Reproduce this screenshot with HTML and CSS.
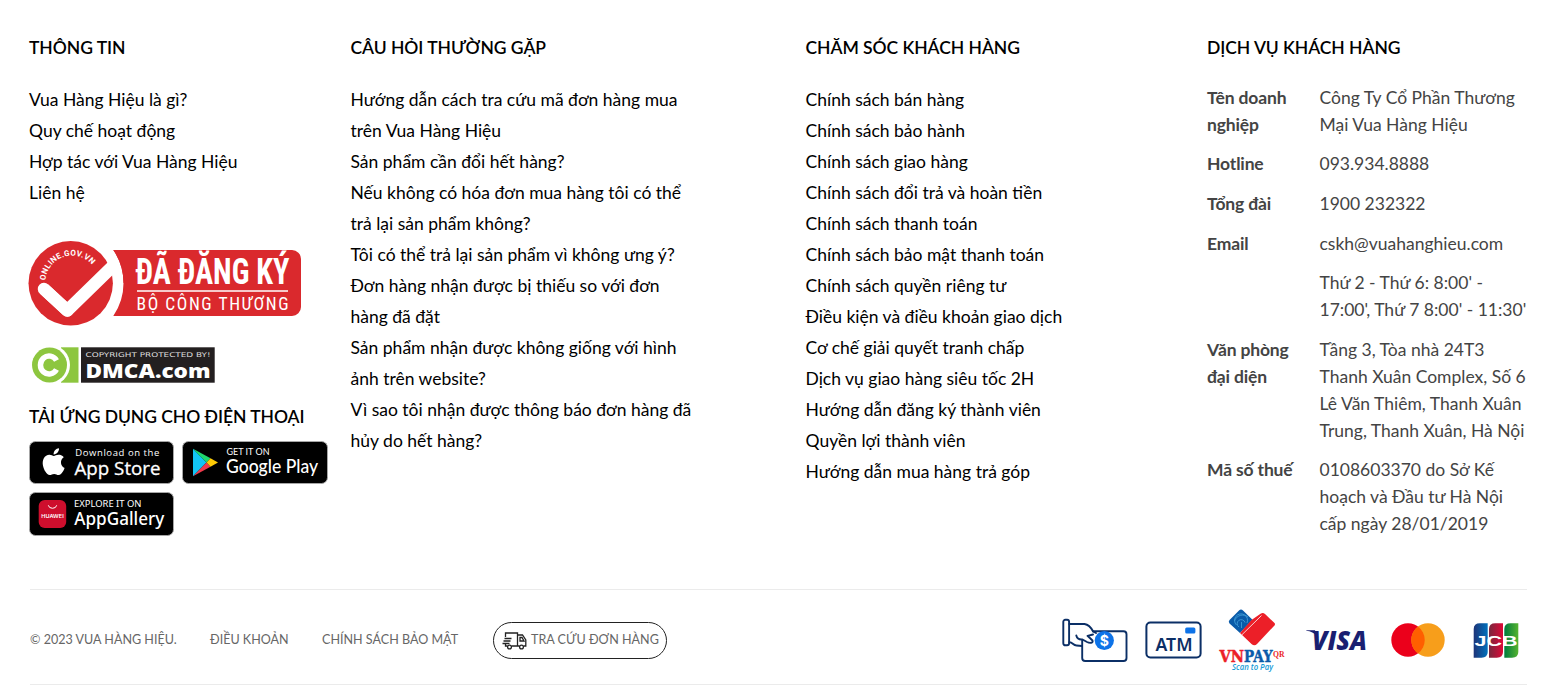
FILE: index.html
```html
<!DOCTYPE html>
<html lang="vi">
<head>
<meta charset="utf-8">
<title>Vua Hàng Hiệu</title>
<link rel="stylesheet" href="styles.css">
</head>
<body>
<footer class="footer">
  <div class="columns">
    <section class="col">
      <h4 class="title">THÔNG TIN</h4>
      <ul class="links">
        <li>Vua Hàng Hiệu là gì?</li>
        <li>Quy chế hoạt động</li>
        <li>Hợp tác với Vua Hàng Hiệu</li>
        <li>Liên hệ</li>
      </ul>
      <svg class="gov" width="273" height="87" viewBox="0 0 273 87">
        <circle cx="41.7" cy="43.3" r="42.2" fill="#da292d"/>
        <path d="M84.3 10H263a9 9 0 0 1 9 9V67a9 9 0 0 1-9 9H84.3Q94.500 61 94.500 43T84.300 10Z" fill="#da292d"/>
        <path d="M15 49L38.300 70.500L85 25" fill="none" stroke="#fff" stroke-width="12.500" stroke-linejoin="round"/>
        <path d="M15 49L38.300 70.500" fill="none" stroke="#fff" stroke-width="12.500" stroke-linecap="round"/>
        <path d="M84.300 10Q94.500 25 94.500 43L100 43V10Z" fill="#da292d"/>
        <path id="arc" d="M16.500 40.500A26.500 26.500 0 0 1 66.500 30" fill="none"/>
        <text class="gov-arc"><textPath href="#arc">ONLINE.GOV.VN</textPath></text>
        <text class="gov-big" x="106.500" y="44.300" textLength="154" lengthAdjust="spacingAndGlyphs">ĐÃ ĐĂNG KÝ</text>
        <path d="M108 51H259" stroke="#fff" stroke-width="1.600"/>
        <text class="gov-small" x="107.500" y="70" textLength="152">BỘ CÔNG THƯƠNG</text>
      </svg>
      <svg class="dmca" width="186" height="38" viewBox="0 0 186 38">
        <path d="M30 1.300H47.500V36.700H30Z" fill="#8dc63f"/>
        <circle cx="18.500" cy="19" r="20.500" fill="#fff"/>
        <circle cx="18.500" cy="19" r="17.500" fill="#8dc63f"/>
        <path d="M25.500 14.500A8.600 9 0 1 0 25.500 23.500" fill="none" stroke="#fff" stroke-width="5.500"/>
        <rect x="50" y="1.300" width="133.700" height="35.400" fill="#231f20"/>
        <text class="dmca-top" x="54.500" y="10.800" textLength="125" lengthAdjust="spacingAndGlyphs">COPYRIGHT PROTECTED BY!</text>
        <text class="dmca-big" x="54.500" y="32" textLength="125" lengthAdjust="spacingAndGlyphs">DMCA.com</text>
      </svg>
      <h4 class="title app-title">TẢI ỨNG DỤNG CHO ĐIỆN THOẠI</h4>
      <div class="apps">
        <svg width="145" height="43" viewBox="0 0 145 43">
          <rect x=".5" y=".5" width="144" height="42" rx="6" fill="#000" stroke="#a6a6a6"/>
          <path transform="translate(11.200 7.200) scale(1.120)" fill="#fff" d="M12.152 6.896c-.948 0-2.415-1.078-3.960-1.040-2.040.027-3.910 1.183-4.961 3.014-2.117 3.675-.546 9.103 1.519 12.090 1.013 1.454 2.208 3.090 3.792 3.039 1.520-.065 2.090-.987 3.935-.987 1.831 0 2.350.987 3.960.948 1.637-.026 2.676-1.480 3.676-2.948 1.156-1.688 1.636-3.325 1.662-3.415-.039-.013-3.182-1.221-3.220-4.857-.026-3.040 2.480-4.494 2.597-4.559-1.429-2.090-3.623-2.324-4.390-2.376-2-.156-3.675 1.090-4.610 1.090zM15.530 3.830c.843-1.012 1.400-2.427 1.245-3.830-1.207.052-2.662.805-3.532 1.818-.780.896-1.454 2.338-1.273 3.714 1.338.104 2.715-.688 3.559-1.701"/>
          <text class="b-sm" x="46.300" y="14.500" textLength="84">Download on the</text>
          <text class="b-os" x="45.500" y="33.500" textLength="86" lengthAdjust="spacingAndGlyphs">App Store</text>
        </svg>
        <svg width="146" height="43" viewBox="0 0 146 43">
          <rect x=".5" y=".5" width="145" height="42" rx="6" fill="#000" stroke="#a6a6a6"/>
          <path d="M11 7.700V35.300L24.500 21.500Z" fill="#12c5f5"/>
          <path d="M11 7.700L28.500 17.200L24.500 21.500Z" fill="#1fd76e"/>
          <path d="M11 35.300L28.500 25.800L24.500 21.500Z" fill="#f0394b"/>
          <path d="M28.500 17.200L36 21.500L28.500 25.800L24.500 21.500Z" fill="#ffcb05"/>
          <text class="b-gt" x="44.500" y="14" textLength="43" lengthAdjust="spacingAndGlyphs">GET IT ON</text>
          <text class="b-gp" x="44" y="31.800" textLength="92" lengthAdjust="spacingAndGlyphs">Google Play</text>
        </svg>
        <svg width="145" height="44" viewBox="0 0 145 44">
          <rect x=".5" y=".5" width="144" height="43" rx="6" fill="#000" stroke="#a6a6a6"/>
          <rect x="9.700" y="8" width="27.500" height="28" rx="6" fill="#ce0e2d"/>
          <path d="M19.300 13.300A4.300 3.800 0 0 0 27.700 13.300" fill="none" stroke="#fff" stroke-width="1"/>
          <text class="b-hw" x="12.300" y="25.600" textLength="22.400" lengthAdjust="spacingAndGlyphs">HUAWEI</text>
          <text class="b-ex" x="45" y="14.700" textLength="67.500" lengthAdjust="spacingAndGlyphs">EXPLORE IT ON</text>
          <text class="b-ag" x="45.300" y="33" textLength="90" lengthAdjust="spacingAndGlyphs">AppGallery</text>
        </svg>
      </div>
    </section>

    <section class="col">
      <h4 class="title">CÂU HỎI THƯỜNG GẶP</h4>
      <ul class="links">
        <li>Hướng dẫn cách tra cứu mã đơn hàng mua<br>trên Vua Hàng Hiệu</li>
        <li>Sản phẩm cần đổi hết hàng?</li>
        <li>Nếu không có hóa đơn mua hàng tôi có thể<br>trả lại sản phẩm không?</li>
        <li>Tôi có thể trả lại sản phẩm vì không ưng ý?</li>
        <li>Đơn hàng nhận được bị thiếu so với đơn<br>hàng đã đặt</li>
        <li>Sản phẩm nhận được không giống với hình<br>ảnh trên website?</li>
        <li>Vì sao tôi nhận được thông báo đơn hàng đã<br>hủy do hết hàng?</li>
      </ul>
    </section>

    <section class="col">
      <h4 class="title">CHĂM SÓC KHÁCH HÀNG</h4>
      <ul class="links">
        <li>Chính sách bán hàng</li>
        <li>Chính sách bảo hành</li>
        <li>Chính sách giao hàng</li>
        <li>Chính sách đổi trả và hoàn tiền</li>
        <li>Chính sách thanh toán</li>
        <li>Chính sách bảo mật thanh toán</li>
        <li>Chính sách quyền riêng tư</li>
        <li>Điều kiện và điều khoản giao dịch</li>
        <li>Cơ chế giải quyết tranh chấp</li>
        <li>Dịch vụ giao hàng siêu tốc 2H</li>
        <li>Hướng dẫn đăng ký thành viên</li>
        <li>Quyền lợi thành viên</li>
        <li>Hướng dẫn mua hàng trả góp</li>
      </ul>
    </section>

    <section class="col">
      <h4 class="title">DỊCH VỤ KHÁCH HÀNG</h4>
      <dl class="info">
        <dt>Tên doanh<br>nghiệp</dt><dd>Công Ty Cổ Phần Thương<br>Mại Vua Hàng Hiệu</dd>
        <dt>Hotline</dt><dd>093.934.8888</dd>
        <dt>Tổng đài</dt><dd>1900 232322</dd>
        <dt>Email</dt><dd>cskh@vuahanghieu.com</dd>
        <dt></dt><dd>Thứ 2 - Thứ 6: 8:00' -<br>17:00', Thứ 7 8:00' - 11:30'</dd>
        <dt>Văn phòng<br>đại diện</dt><dd>Tầng 3, Tòa nhà 24T3<br>Thanh Xuân Complex, Số 6<br>Lê Văn Thiêm, Thanh Xuân<br>Trung, Thanh Xuân, Hà Nội</dd>
        <dt>Mã số thuế</dt><dd>0108603370 do Sở Kế<br>hoạch và Đầu tư Hà Nội<br>cấp ngày 28/01/2019</dd>
      </dl>
    </section>
  </div>

  <div class="bottom">
    <nav class="legal">
      <span class="copy">© 2023 VUA HÀNG HIỆU.</span>
      <span class="terms">ĐIỀU KHOẢN</span>
      <span class="privacy">CHÍNH SÁCH BẢO MẬT</span>
      <span class="track">
        <svg width="25" height="18" viewBox="0 0 25 18" fill="none" stroke="#222" stroke-width="1.300">
          <path d="M3.500 5V1H15.500V14H9.500M15.500 3H20.500L23.800 8V14H21.500M17.500 14H15.500M18 5.500H20L22 9H18ZM2.500 6.500H9.500M1.500 9H8.500M.5 11.500H7.500M3.500 11.500V14H5.500"/>
          <circle cx="7.500" cy="15" r="1.900"/><circle cx="19.500" cy="15" r="1.900"/>
        </svg>
        <span class="track-text">TRA CỨU ĐƠN HÀNG</span>
      </span>
    </nav>
    <div class="pay">
      <svg width="66" height="45" viewBox="0 0 66 45" fill="none" stroke="#0b2f66" stroke-width="1.900" stroke-linejoin="round" stroke-linecap="round">
        <rect x="1.300" y="1.800" width="5.800" height="25.500" rx="2"/>
        <path d="M7.300 6H22.500C26 6.500 29 9.500 31 13.300H61.500A3 3 0 0 1 64.500 16.300V40A3 3 0 0 1 61.500 43H23.200A3 3 0 0 1 20.200 40V22.500"/>
        <path d="M7.300 24.300C10.500 24 11 27.500 14.500 27.500L20 28M14.300 17.500C15 20.500 17.500 21.800 20.500 21.500L25 24C28 25.500 31.500 25 30.500 22.500L25.500 17.800L31 16.500M31 13.300L34 15"/>
        <circle cx="42.300" cy="22.500" r="9.600" fill="#0d73e8" stroke="none"/>
        <text class="dollar" x="42.300" y="27.600" text-anchor="middle">$</text>
      </svg>
      <svg class="atm" width="57" height="38" viewBox="0 0 57 38">
        <rect x="1.400" y="1.500" width="54.200" height="35" rx="4" fill="#fff" stroke="#0b2f66" stroke-width="2"/>
        <rect x="40.200" y="6.500" width="10.200" height="6" rx="1.500" fill="#0d73e8"/>
        <text class="atm-text" x="10.500" y="29.500" textLength="37" lengthAdjust="spacingAndGlyphs">ATM</text>
      </svg>
      <svg class="vnpay" width="67" height="65" viewBox="0 0 67 65">
        <path d="M20 2.500Q22 .500 24 2.500L33.500 11.800L21 25L10.500 15.500Q9 13.700 10.500 12Z" fill="#0a5ba9"/>
        <path d="M21 25L32.500 12L41.500 5.700Q44 4 46 6L55.500 15Q56.700 16.500 55 18L38 36Q35.500 38.500 32.500 36Z" fill="#ec1f28"/>
        <path d="M23 26.700L42.500 7.500" stroke="#fff" stroke-width=".8"/>
        <path d="M17.500 17A6.500 6.500 0 1 1 28 15M20 19A4 4 0 1 1 26 14.500M22.500 20V14M15.500 13A8.500 8.500 0 0 1 29 9" fill="none" stroke="#45a3da" stroke-width=".8"/>
        <text class="vn vn-red" x=".5" y="54" textLength="24.500" lengthAdjust="spacingAndGlyphs">VN</text>
        <text class="vn vn-blue" x="25" y="54" textLength="28.500" lengthAdjust="spacingAndGlyphs">PAY</text>
        <text class="qr" x="54" y="48.800" textLength="11.500" lengthAdjust="spacingAndGlyphs">QR</text>
        <text class="scan" x="13" y="62" textLength="41" lengthAdjust="spacingAndGlyphs">Scan to Pay</text>
      </svg>
      <svg class="visa" width="62" height="24" viewBox="0 0 62 24">
        <path d="M.3 2.200H9L11 8Q7 3.500 .3 2.800Z" fill="#1a1f71"/>
        <text class="visa-text" x="6" y="21.500" textLength="55" lengthAdjust="spacingAndGlyphs">VISA</text>
      </svg>
      <svg class="mc" width="54" height="34" viewBox="0 0 54 34">
        <circle cx="17" cy="17" r="16.700" fill="#eb001b"/>
        <circle cx="37" cy="17" r="16.700" fill="#f79e1b"/>
        <path d="M27 3.600A16.700 16.700 0 0 1 27 30.400A16.700 16.700 0 0 1 27 3.600Z" fill="#ff5f00"/>
      </svg>
      <svg class="jcb" width="46" height="35" viewBox="0 0 46 35">
        <defs>
          <linearGradient id="jb"><stop offset="0" stop-color="#1e3478"/><stop offset="1" stop-color="#0071bc"/></linearGradient>
          <linearGradient id="jr"><stop offset="0" stop-color="#78283d"/><stop offset="1" stop-color="#dd0837"/></linearGradient>
          <linearGradient id="jg"><stop offset="0" stop-color="#007b3e"/><stop offset="1" stop-color="#55b330"/></linearGradient>
        </defs>
        <path d="M.7 6Q.7.300 7 .300H14.700V29Q14.700 34.700 8.500 34.700H.7Z" fill="url(#jb)"/>
        <path d="M16 6Q16 .300 22.300 .300H30V29Q30 34.700 23.800 34.700H16Z" fill="url(#jr)"/>
        <path d="M31.300 6Q31.300 .300 37.600 .300H45.300V29Q45.300 34.700 39.100 34.700H31.300Z" fill="url(#jg)"/>
        <text class="jcb-text" x="1.500" y="22.500" textLength="43" lengthAdjust="spacingAndGlyphs">JCB</text>
      </svg>
    </div>
  </div>
</footer>
</body>
</html>
```
FILE: styles.css
```css
* { box-sizing: border-box; }
body { margin: 0; background: #fff; font-family: Lato, "Open Sans", sans-serif; }
svg { display: block; flex: none; overflow: visible; }
h4, ul, dl, dd { margin: 0; padding: 0; }

.footer { padding: 34px 25px 0 29px; }
.columns { display: grid; grid-template-columns: 321.500px 455px 401.500px 1fr; height: 555px; }
.col { white-space: nowrap; }
.title { font-size: 17.500px; line-height: 27px; font-weight: 600; letter-spacing: -.05px; color: #000; }
.links { list-style: none; margin-top: 23px; font-size: 17.500px; line-height: 31px; color: #000; }
.gov { margin-top: 32px; }
.dmca { margin: 19px 0 0 2px; }
.app-title { margin-top: 19px; }
.apps { display: flex; flex-wrap: wrap; gap: 8px; width: 310px; margin-top: 11px; }

.info { display: grid; grid-template-columns: 112.500px 1fr; row-gap: 12.600px; margin-top: 22.900px; font-size: 17.500px; line-height: 27px; color: #444; }
.info dt { font-weight: 700; letter-spacing: -.15px; }

.bottom { display: flex; justify-content: space-between; align-items: flex-start; height: 96px; margin-left: 1px; border: solid #ebebeb; border-width: 1px 0; }
.legal { display: flex; align-items: center; height: 37px; margin-top: 32px; font-size: 12.550px; color: #666; white-space: nowrap; }
.copy, .terms, .privacy, .track-text { padding-bottom: 3px; }
.copy { width: 180px; }
.terms { width: 112px; }
.privacy { width: 171px; }
.track { display: flex; align-items: center; gap: 4.500px; width: 174px; height: 37px; padding-left: 7.500px; border: 1px solid #222; border-radius: 19px; }
.pay { display: flex; align-items: center; height: 64px; margin: 18px 8px 0 0; }
.atm { margin-left: 17px; }
.vnpay { margin-left: 17px; }
.visa { margin-left: 20px; }
.mc { margin-left: 23px; }
.jcb { margin-left: 28px; }

.gov-arc { font: 700 8px Roboto, sans-serif; fill: #fff; letter-spacing: .3px; }
.gov-big { font: 700 36px "Roboto Condensed", Roboto, sans-serif; fill: #fff; }
.gov-small { font: 400 17.500px "Roboto Condensed", Roboto, sans-serif; fill: #fff; }
.dmca-top { font: 400 6.500px "DejaVu Sans", sans-serif; fill: #ddd; }
.dmca-big { font: 800 20px "Open Sans", sans-serif; fill: #fff; }
.b-sm { font: 400 9.500px "Open Sans", sans-serif; fill: #fff; }
.b-os { font: 500 18.500px "Open Sans", sans-serif; fill: #fff; stroke: #fff; stroke-width: .3px; }
.b-gt { font: 400 9px Lato, sans-serif; fill: #fff; }
.b-gp { font: 500 18.500px Lato, sans-serif; fill: #fff; }
.b-hw { font: 600 5px Inter, sans-serif; fill: #fff; }
.b-ex { font: 400 9.500px "Noto Sans", sans-serif; fill: #fff; }
.b-ag { font: 500 17.500px "Noto Sans", sans-serif; fill: #fff; }
.dollar { font: 700 14px Inter, sans-serif; fill: #fff; stroke: none; }
.atm-text { font: 600 17px "Noto Sans", sans-serif; fill: #0b2f66; }
.vn { font: 700 16px "DejaVu Serif", serif; stroke-width: .5px; }
.vn-red { fill: #ec1f28; stroke: #ec1f28; }
.vn-blue { fill: #0a5ba9; stroke: #0a5ba9; }
.qr { font: 700 9px "Liberation Serif", serif; fill: #ec1f28; }
.scan { font: italic 600 8.500px "Open Sans", sans-serif; fill: #159bd7; }
.visa-text { font: italic 800 27px "Open Sans", sans-serif; fill: #1a1f71; }
.jcb-text { font: 700 14px "Liberation Sans", sans-serif; fill: #fff; }
```
